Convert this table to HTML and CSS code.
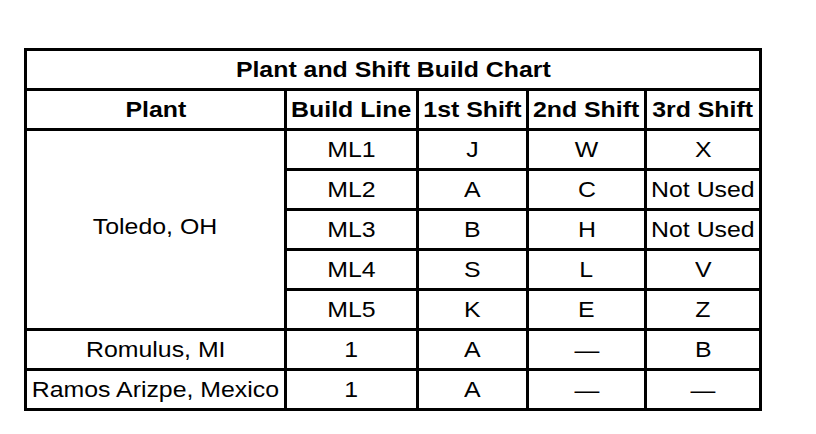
FILE: index.html
```html
<!DOCTYPE html>
<html lang="en">
<head>
<meta charset="utf-8">
<title>Plant and Shift Build Chart</title>
<link rel="stylesheet" href="styles.css">
</head>
<body>
<div class="chart" role="table" aria-label="Plant and Shift Build Chart">
  <div class="cell title"><span class="t">Plant and Shift Build Chart</span></div>
  <div class="cell head"><span class="t">Plant</span></div>
  <div class="cell head"><span class="t">Build Line</span></div>
  <div class="cell head"><span class="t">1st Shift</span></div>
  <div class="cell head"><span class="t">2nd Shift</span></div>
  <div class="cell head"><span class="t">3rd Shift</span></div>

  <div class="cell plant-span"><span class="t">Toledo, OH</span></div>
  <div class="cell"><span class="t">ML1</span></div><div class="cell"><span class="t">J</span></div><div class="cell"><span class="t">W</span></div><div class="cell"><span class="t">X</span></div>
  <div class="cell"><span class="t">ML2</span></div><div class="cell"><span class="t">A</span></div><div class="cell"><span class="t">C</span></div><div class="cell"><span class="t">Not Used</span></div>
  <div class="cell"><span class="t">ML3</span></div><div class="cell"><span class="t">B</span></div><div class="cell"><span class="t">H</span></div><div class="cell"><span class="t">Not Used</span></div>
  <div class="cell"><span class="t">ML4</span></div><div class="cell"><span class="t">S</span></div><div class="cell"><span class="t">L</span></div><div class="cell"><span class="t">V</span></div>
  <div class="cell"><span class="t">ML5</span></div><div class="cell"><span class="t">K</span></div><div class="cell"><span class="t">E</span></div><div class="cell"><span class="t">Z</span></div>

  <div class="cell"><span class="t">Romulus, MI</span></div><div class="cell"><span class="t">1</span></div><div class="cell"><span class="t">A</span></div><div class="cell dash"><span class="t">&mdash;</span></div><div class="cell"><span class="t">B</span></div>
  <div class="cell"><span class="t">Ramos Arizpe, Mexico</span></div><div class="cell"><span class="t">1</span></div><div class="cell"><span class="t">A</span></div><div class="cell dash"><span class="t">&mdash;</span></div><div class="cell dash"><span class="t">&mdash;</span></div>
</div>
</body>
</html>
```
FILE: styles.css
```css
html, body {
  margin: 0;
  padding: 0;
  background: #fff;
}
body {
  font-family: "Liberation Sans", Arial, sans-serif;
  color: #000;
}
.chart {
  display: grid;
  grid-template-columns: 257px 129px 107px 115px 112px;
  grid-auto-rows: 37px;
  gap: 3px;
  padding: 3px;
  background: #000;
  width: max-content;
  margin: 48px 0 0 24px;
}
.cell {
  background: #fff;
  display: flex;
  align-items: center;
  justify-content: center;
  font-size: 22px;
  white-space: nowrap;
}
.t {
  display: inline-block;
  transform: scaleX(1.13);
}
.title {
  grid-column: 1 / -1;
  font-weight: bold;
}
.head {
  font-weight: bold;
}
.plant-span {
  grid-row: span 5;
  padding-bottom: 6px;
}
.dash {
  padding-top: 3px;
}
```
